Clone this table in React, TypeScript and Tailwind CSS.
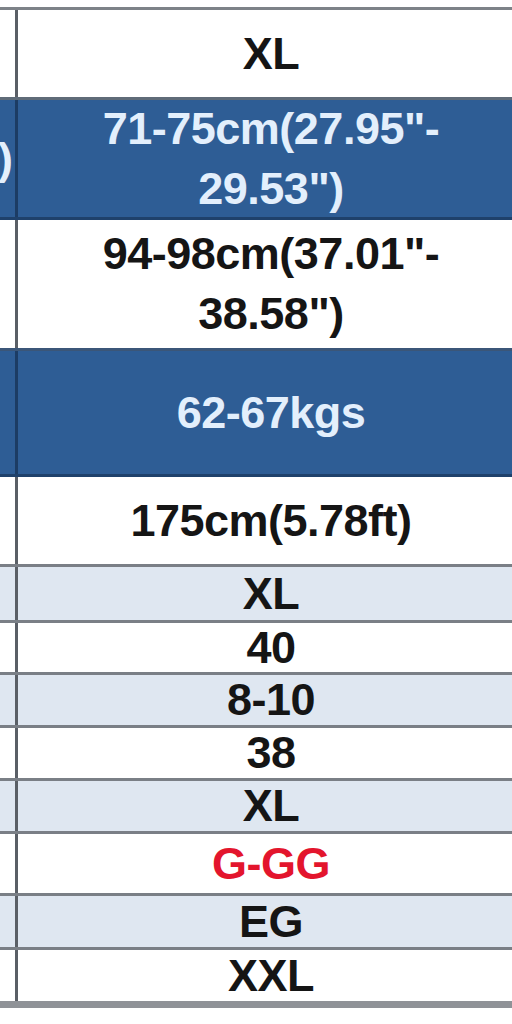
import React from "react";

type Row = {
  h: number;
  bg: "white" | "blue" | "light";
  lines: string[];
  red?: boolean;
  left?: string;
  borderBelow: string;
};

const rows: Row[] = [
  { h: 87, bg: "white", lines: ["XL"], borderBelow: "border-b-[#5f6b78]" },
  { h: 117, bg: "blue", lines: ["71-75cm(27.95\"-", "29.53\")"], left: ")", borderBelow: "border-b-[#1f416b]" },
  { h: 128, bg: "white", lines: ["94-98cm(37.01\"-", "38.58\")"], borderBelow: "border-b-[#3b5678]" },
  { h: 123, bg: "blue", lines: ["62-67kgs"], borderBelow: "border-b-[#1f416b]" },
  { h: 87, bg: "white", lines: ["175cm(5.78ft)"], borderBelow: "border-b-[#7a7f86]" },
  { h: 53, bg: "light", lines: ["XL"], borderBelow: "border-b-[#7a7f86]" },
  { h: 49, bg: "white", lines: ["40"], borderBelow: "border-b-[#7a7f86]" },
  { h: 50, bg: "light", lines: ["8-10"], borderBelow: "border-b-[#7a7f86]" },
  { h: 50, bg: "white", lines: ["38"], borderBelow: "border-b-[#7a7f86]" },
  { h: 50, bg: "light", lines: ["XL"], borderBelow: "border-b-[#7a7f86]" },
  { h: 59, bg: "white", lines: ["G-GG"], red: true, borderBelow: "border-b-[#7a7f86]" },
  { h: 51, bg: "light", lines: ["EG"], borderBelow: "border-b-[#7a7f86]" },
  { h: 51, bg: "white", lines: ["XXL"], borderBelow: "border-b-[#8f9297]" },
];

const bgClass = {
  white: "bg-white",
  blue: "bg-[#2e5d95]",
  light: "bg-[#dfe7f1]",
};

export default function App() {
  return (
    <div
      className="w-[512px] h-[1024px] overflow-hidden bg-white"
      style={{ fontFamily: '"Liberation Sans", Arial, sans-serif' }}
    >
      <div className="w-[524px] pt-[7px]">
        <div className="w-full border-t-[3px] border-t-[#7d8288]" />
        {rows.map((r, i) => {
          const last = i === rows.length - 1;
          const textColor = r.bg === "blue" ? "text-[#e3effc]" : r.red ? "text-[#e3152d]" : "text-[#151515]";
          return (
            <div
              key={i}
              className={`flex w-full ${bgClass[r.bg]} ${last ? "border-b-[7px]" : "border-b-[3px]"} ${r.borderBelow}`}
              style={{ height: r.h + (last ? 7 : 3) }}
            >
              <div
                className={`w-[18px] shrink-0 border-r-[3px] ${
                  r.bg === "blue" ? "border-r-[#1c3c64]" : "border-r-[#5a5f66]"
                } flex items-center justify-start overflow-hidden`}
              >
                {r.left && (
                  <span className="text-[45px] font-bold leading-none text-[#e3effc] -ml-[2px]">{r.left}</span>
                )}
              </div>
              <div className={`flex-1 flex flex-col items-center justify-center ${textColor}`}>
                {r.lines.map((l, j) => (
                  <div key={j} className="text-[45px] font-bold leading-[60px] tracking-[-0.5px] whitespace-nowrap">
                    {l}
                  </div>
                ))}
              </div>
            </div>
          );
        })}
      </div>
    </div>
  );
}
